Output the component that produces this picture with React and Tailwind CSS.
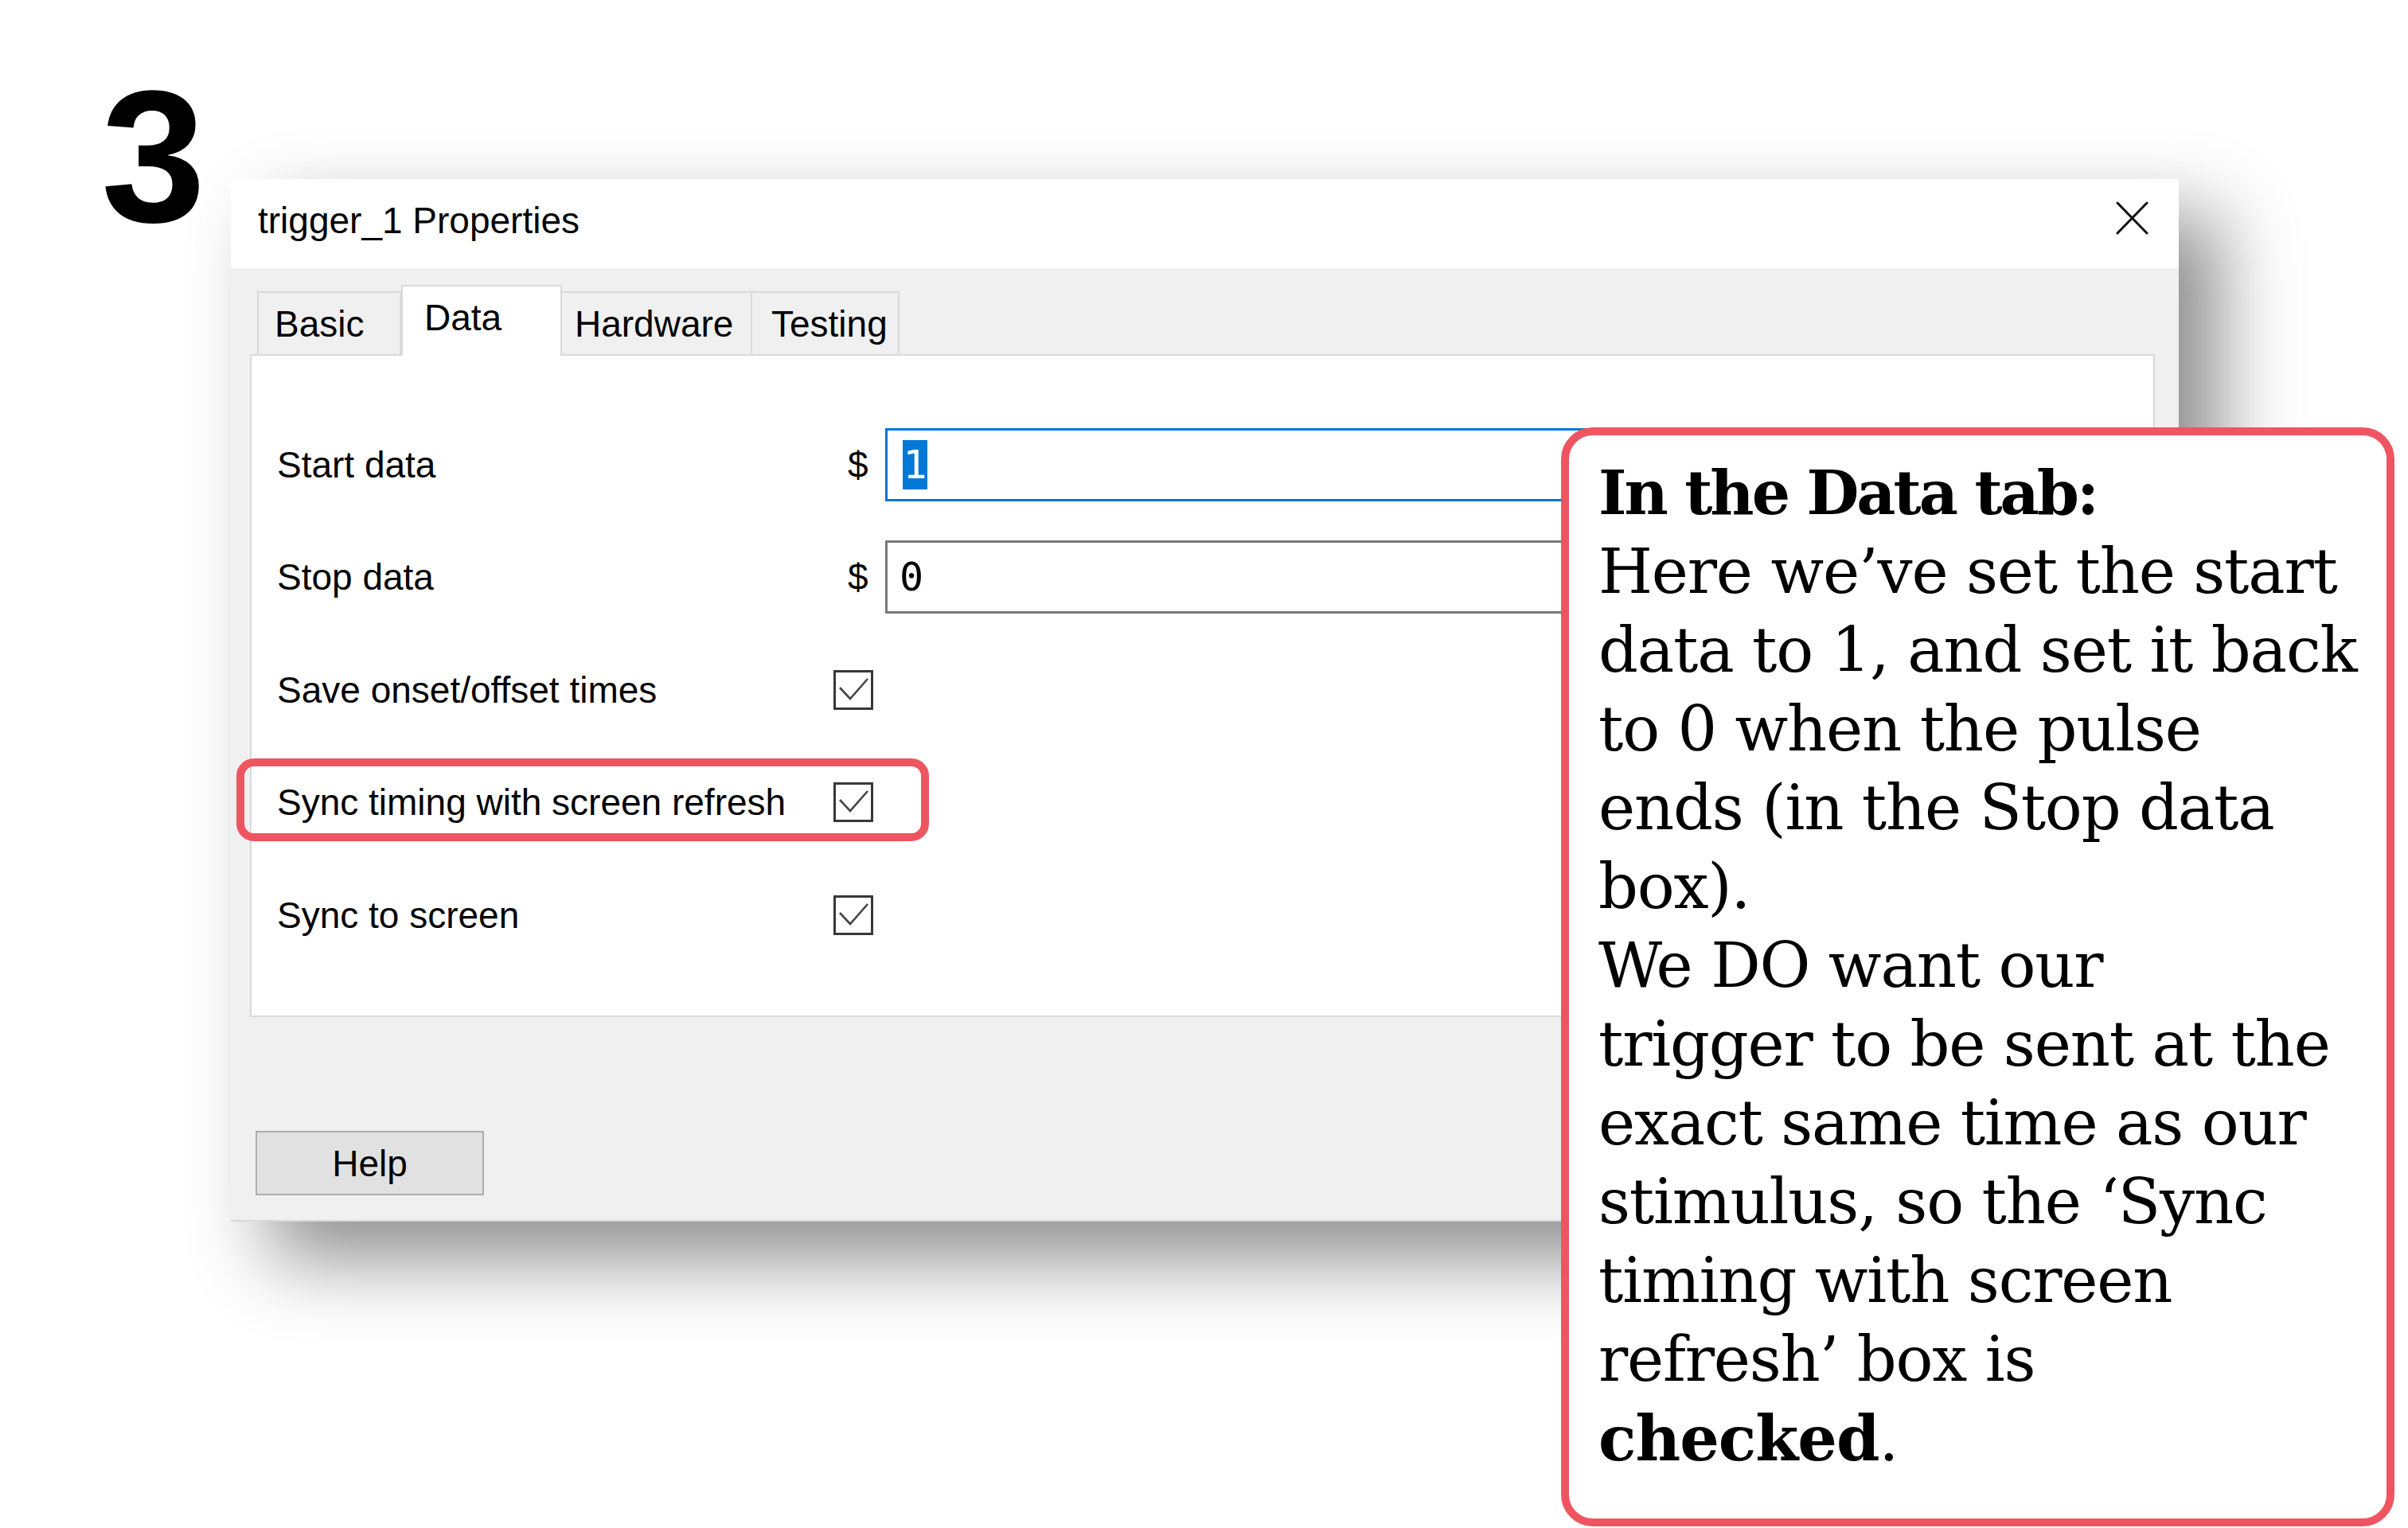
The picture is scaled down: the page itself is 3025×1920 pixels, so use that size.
import React from "react";

const rows = [
  { label: "Start data", kind: "input", value: "1", active: true },
  { label: "Stop data", kind: "input", value: "0" },
  { label: "Save onset/offset times", kind: "check" },
  { label: "Sync timing with screen refresh", kind: "check" },
  { label: "Sync to screen", kind: "check" },
];

const tabs = [
  { name: "Basic", w: "w-[181px]", pl: "pl-[20px]" },
  { name: "Data", w: "w-[202px]", pl: "pl-[27px]", active: true },
  { name: "Hardware", w: "w-[241px]", pl: "pl-[16px]" },
  { name: "Testing", w: "w-[187px]", pl: "pl-[24px]" },
];

const notes = [
  "Here we’ve set the start",
  "data to 1, and set it back",
  "to 0 when the pulse",
  "ends (in the Stop data",
  "box).",
  "We DO want our",
  "trigger to be sent at the",
  "exact same time as our",
  "stimulus, so the ‘Sync",
  "timing with screen",
  "refresh’ box is",
];

function Checkbox() {
  return (
    <div className="w-[50px] h-[50px] border-[3px] border-[#383838] bg-white">
      <svg width="44" height="44" viewBox="0 0 44 44" fill="none">
        <path d="M5 19 L18 33 L40 8" stroke="#454545" strokeWidth="2.6" strokeLinejoin="miter" />
      </svg>
    </div>
  );
}

function Field({ value, active }) {
  return (
    <>
      <span className="ml-[18px] w-[47px]">$</span>
      <div
        className={`w-[1400px] h-[92px] border-[3px] bg-white flex items-center ${
          active ? "border-[#0078d7] pl-[19px]" : "border-[#7a7a7a] pl-[15px]"
        }`}
      >
        <span
          className={`font-['DejaVu_Sans_Mono',monospace] text-[50px] leading-none ${
            active ? "bg-[#0078d7] text-white w-[31px] h-[62px] flex items-center justify-center" : "text-black"
          }`}
        >
          {value}
        </span>
      </div>
    </>
  );
}

function Dialog() {
  return (
    <div className="w-[2447px] h-[1310px] bg-[#f0f0f0] flex flex-col border-b-2 border-[#d8d8d8] shadow-[50px_46px_92px_rgba(0,0,0,0.45)] text-black text-[46px] leading-[46px]">
      {/* title bar */}
      <div className="h-[112px] shrink-0 bg-white flex items-center pl-[34px] pr-[38px]">
        <span className="mb-[8px]">trigger_1 Properties</span>
        <svg className="ml-auto mb-[14px]" width="41" height="42" viewBox="0 0 41 42">
          <path d="M2 2 L39 40 M39 2 L2 40" stroke="#111" strokeWidth="3" strokeLinecap="round" />
        </svg>
      </div>

      {/* tabs */}
      <div className="h-[108px] shrink-0 flex items-end pl-[33px]">
        {tabs.map((t) =>
          t.active ? (
            <div
              key={t.name}
              className={`${t.w} ${t.pl} relative z-10 -mb-[2px] h-[89px] bg-white border-2 border-b-0 border-[#d9d9d9] pt-[16px]`}
            >
              {t.name}
            </div>
          ) : (
            <div
              key={t.name}
              className={`${t.w} ${t.pl} h-[79px] bg-[#f0f0f0] border-2 border-b-0 border-[#d9d9d9] -ml-[2px] first:ml-0 pt-[16px]`}
            >
              {t.name}
            </div>
          )
        )}
      </div>

      {/* panel */}
      <div className="ml-[24px] w-[2393px] h-[833px] shrink-0 bg-white border-2 border-[#d9d9d9] pl-[32px] pt-[66px]">
        {rows.map((r) => (
          <div key={r.label} className="h-[141.5px] flex items-center">
            <span className="w-[699px] shrink-0 whitespace-nowrap">{r.label}</span>
            {r.kind === "check" ? <Checkbox /> : <Field value={r.value} active={r.active} />}
          </div>
        ))}
      </div>

      {/* footer */}
      <div className="flex-1 pl-[31px] pt-[143px]">
        <button className="w-[287px] h-[81px] border-2 border-[#adadad] bg-[#e1e1e1] flex items-center justify-center">
          Help
        </button>
      </div>
    </div>
  );
}

export default function App() {
  return (
    <div className="relative w-[3025px] h-[1920px] bg-white overflow-hidden font-['Liberation_Sans',Arial,sans-serif]">
      <div className="absolute left-[127px] top-[78px] text-[236px] leading-none font-bold text-black">3</div>

      <div className="pl-[290px] pt-[225px]">
        <Dialog />
      </div>

      {/* highlight round the sync option */}
      <div className="absolute left-[297px] top-[953px] w-[870px] h-[104px] border-[10px] border-[#ef5561] rounded-[22px]" />

      {/* callout */}
      <div className="absolute left-[1961px] top-[537px] w-[1047px] h-[1381px] border-[10px] border-[#ef5561] rounded-[40px] bg-white pl-[37px] pt-[23px] font-['DejaVu_Serif',serif] text-[78px] leading-[99px] tracking-[-1.2px] text-black">
        <div className="whitespace-nowrap font-bold text-[76px] tracking-[-3px]">In the Data tab:</div>
        {notes.map((n) => (
          <div key={n} className="whitespace-nowrap">
            {n}
          </div>
        ))}
        <div className="whitespace-nowrap">
          <b className="tracking-[-1px]">checked</b>.
        </div>
      </div>
    </div>
  );
}
